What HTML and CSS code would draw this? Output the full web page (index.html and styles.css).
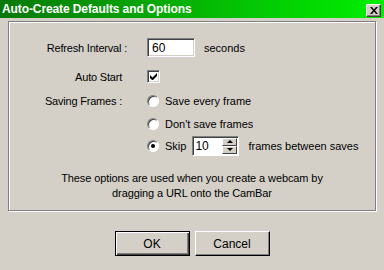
FILE: index.html
```html
<!DOCTYPE html>
<html lang="en">
<head>
    <meta charset="UTF-8">
    <title>Auto-Create Defaults and Options</title>
    <link rel="stylesheet" href="styles.css">
</head>
<body>
    <div class="dialog">
        <div class="title-bar">
            <span class="title">Auto-Create Defaults and Options</span>
            <button class="close-btn" aria-label="Close">
                <svg width="8" height="7" viewBox="0 0 8 7">
                    <path d="M0 0h2l2 2.5L6 0h2L5 3.5 8 7H6L4 4.5 2 7H0l3-3.5z" fill="#000"/>
                </svg>
            </button>
        </div>

        <div class="group">
            <div class="row row-refresh">
                <label class="label label-refresh" for="interval">Refresh Interval :</label>
                <input class="field" type="text" id="interval" value="60">
                <span class="after">seconds</span>
            </div>

            <div class="row row-auto">
                <span class="label">Auto Start</span>
                <span class="check">
                    <svg width="7" height="7" viewBox="0 0 7 7">
                        <path d="M0 2v3l2 2h1l4-4V0L2.5 4.5z" fill="#000"/>
                    </svg>
                </span>
            </div>

            <div class="row row-radio first">
                <span class="label">Saving Frames :</span>
                <span class="radio"></span>
                <span class="opt">Save every frame</span>
            </div>

            <div class="row row-radio second">
                <span class="label"></span>
                <span class="radio"></span>
                <span class="opt">Don't save frames</span>
            </div>

            <div class="row row-skip">
                <span class="label"></span>
                <span class="radio on"></span>
                <span class="opt">Skip</span>
                <span class="spinner">
                    <span class="spin-val">10</span>
                    <span class="spin-btns">
                        <span class="spin-btn"><i class="arrow up"></i></span>
                        <span class="spin-btn"><i class="arrow down"></i></span>
                    </span>
                </span>
                <span class="after-skip">frames between saves</span>
            </div>

            <p class="note">These options are used when you create a webcam by<br>dragging a URL onto the CamBar</p>
        </div>

        <div class="buttons">
            <button class="btn default">OK</button>
            <button class="btn">Cancel</button>
        </div>
    </div>
</body>
</html>
```

FILE: styles.css
```css
* {
    margin: 0;
    padding: 0;
    box-sizing: border-box;
}

body {
    width: 384px;
    height: 270px;
    overflow: hidden;
    background-color: #d4d0c8;
    font-family: "Liberation Sans", Arial, sans-serif;
    font-size: 11px;
    color: #000;
}

.title-bar {
    height: 18px;
    display: flex;
    align-items: center;
    justify-content: space-between;
    padding: 0 3px 0 2px;
    background: linear-gradient(to right, #0a780a, #00f000);
}

.title {
    color: #fff;
    font-weight: bold;
    font-size: 12px;
    letter-spacing: -0.1px;
}

.close-btn {
    width: 15px;
    height: 13px;
    margin-top: 2px;
    display: flex;
    align-items: center;
    justify-content: center;
    background-color: #d4d0c8;
    border: 1px solid;
    border-color: #fff #404040 #404040 #fff;
    box-shadow: inset -1px -1px #808080;
}

.group {
    margin: 3px 8px 0 8px;
    height: 190px;
    border: 1px solid #808080;
    box-shadow: inset 1px 1px #fff, 1px 1px #fff;
    padding-top: 16px;
}

.row {
    display: flex;
    align-items: center;
}

.label {
    width: 113px;
    text-align: right;
    flex-shrink: 0;
    margin-right: 25px;
    letter-spacing: -0.2px;
}

.label-refresh {
    width: 118px;
    margin-right: 20px;
}

.field {
    width: 48px;
    height: 19px;
    padding: 0 4px;
    font: inherit;
    font-size: 12px;
    background-color: #fff;
    border: 1px solid;
    border-color: #808080 #fff #fff #808080;
    box-shadow: inset 1px 1px #404040, inset -1px -1px #d4d0c8;
    outline: none;
}

.after {
    margin-left: 9px;
}

.row-auto {
    margin-top: 13px;
    height: 13px;
}

.check {
    width: 13px;
    height: 13px;
    display: flex;
    align-items: center;
    justify-content: center;
    background-color: #fff;
    border: 1px solid;
    border-color: #808080 #fff #fff #808080;
    box-shadow: inset 1px 1px #404040, inset -1px -1px #d4d0c8;
}

.row-radio,
.row-skip {
    height: 13px;
}

.row-radio.first {
    margin-top: 11px;
}

.row-radio.second {
    margin-top: 10px;
}

.radio {
    width: 12px;
    height: 12px;
    border-radius: 50%;
    background-color: #fff;
    border: 1px solid;
    border-color: #808080 #fff #fff #808080;
    box-shadow: inset 1px 1px #404040;
    display: flex;
    align-items: center;
    justify-content: center;
    flex-shrink: 0;
}

.radio.on::after {
    content: "";
    width: 4px;
    height: 4px;
    border-radius: 50%;
    background-color: #000;
}

.opt {
    margin-left: 6px;
}

.row-skip {
    margin-top: 9px;
}

.spinner {
    width: 47px;
    height: 20px;
    margin-left: 6px;
    display: flex;
    background-color: #fff;
    border: 1px solid;
    border-color: #808080 #fff #fff #808080;
    box-shadow: inset 1px 1px #404040;
    padding: 1px 1px 1px 2px;
}

.spin-val {
    flex: 1;
    font-size: 12px;
    line-height: 16px;
}

.spin-btns {
    width: 15px;
    display: flex;
    flex-direction: column;
}

.spin-btn {
    flex: 1;
    display: flex;
    align-items: center;
    justify-content: center;
    background-color: #d4d0c8;
    border: 1px solid;
    border-color: #fff #404040 #404040 #fff;
}

.arrow {
    width: 0;
    height: 0;
    border-left: 3px solid transparent;
    border-right: 3px solid transparent;
}

.arrow.up {
    border-bottom: 3px solid #000;
}

.arrow.down {
    border-top: 3px solid #000;
}

.after-skip {
    margin-left: 9px;
}

.note {
    margin-top: 19px;
    text-align: center;
    line-height: 15px;
    letter-spacing: -0.1px;
}

.buttons {
    display: flex;
    justify-content: center;
    gap: 5px;
    margin-top: 20px;
}

.btn {
    width: 75px;
    height: 25px;
    font: inherit;
    font-size: 12px;
    background-color: #d4d0c8;
    border: 1px solid;
    border-color: #fff #000 #000 #fff;
    box-shadow: inset -1px -1px #808080;
}

.btn.default {
    border: 1px solid #000;
    box-shadow: inset 1px 1px #fff, inset -1px -1px #404040, inset -2px -2px #808080;
}
```
